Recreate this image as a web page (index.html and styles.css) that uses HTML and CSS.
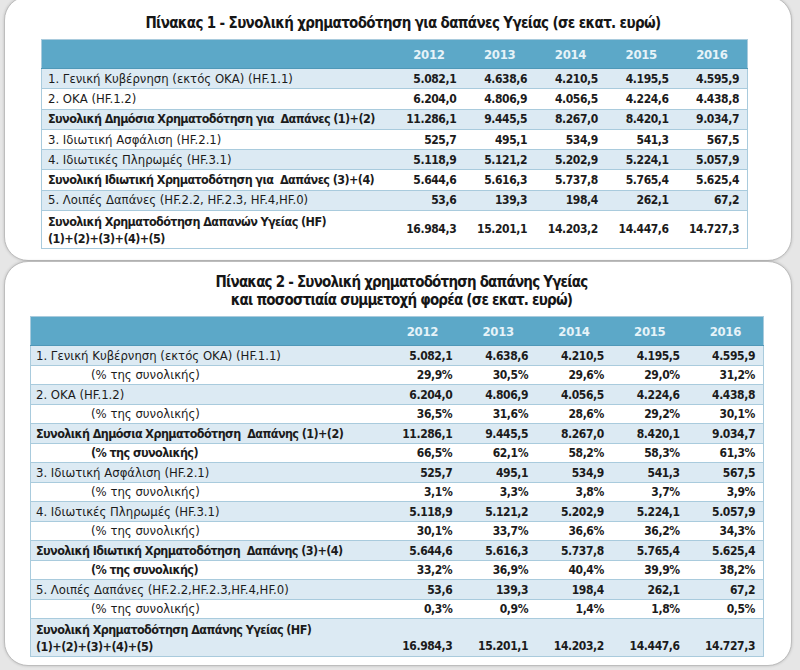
FILE: index.html
```html
<!DOCTYPE html>
<html lang="el">
<head>
<meta charset="utf-8">
<title>Πίνακες χρηματοδότησης Υγείας</title>
<link rel="stylesheet" href="styles.css">
</head>
<body>
<div class="page">
  <section class="card card-1">
    <h2 class="title">Πίνακας 1 - Συνολική χρηματοδότηση για δαπάνες Υγείας (σε εκατ. ευρώ)</h2>
    <table class="data t1">
      <colgroup><col class="c-label"><col><col><col><col><col></colgroup>
      <thead>
        <tr><th></th><th>2012</th><th>2013</th><th>2014</th><th>2015</th><th>2016</th></tr>
      </thead>
      <tbody>
        <tr><td class="lbl">1. Γενική Κυβέρνηση (εκτός ΟΚΑ) (HF.1.1)</td><td>5.082,1</td><td>4.638,6</td><td>4.210,5</td><td>4.195,5</td><td>4.595,9</td></tr>
        <tr><td class="lbl">2. ΟΚΑ (HF.1.2)</td><td>6.204,0</td><td>4.806,9</td><td>4.056,5</td><td>4.224,6</td><td>4.438,8</td></tr>
        <tr class="b"><td class="lbl">Συνολική Δημόσια Χρηματοδότηση για&nbsp; Δαπάνες (1)+(2)</td><td>11.286,1</td><td>9.445,5</td><td>8.267,0</td><td>8.420,1</td><td>9.034,7</td></tr>
        <tr><td class="lbl">3. Ιδιωτική Ασφάλιση (HF.2.1)</td><td>525,7</td><td>495,1</td><td>534,9</td><td>541,3</td><td>567,5</td></tr>
        <tr><td class="lbl">4. Ιδιωτικές Πληρωμές (HF.3.1)</td><td>5.118,9</td><td>5.121,2</td><td>5.202,9</td><td>5.224,1</td><td>5.057,9</td></tr>
        <tr class="b"><td class="lbl">Συνολική Ιδιωτική Χρηματοδότηση για&nbsp; Δαπάνες (3)+(4)</td><td>5.644,6</td><td>5.616,3</td><td>5.737,8</td><td>5.765,4</td><td>5.625,4</td></tr>
        <tr><td class="lbl">5. Λοιπές Δαπάνες (HF.2.2, HF.2.3, HF.4,HF.0)</td><td>53,6</td><td>139,3</td><td>198,4</td><td>262,1</td><td>67,2</td></tr>
        <tr class="b total"><td class="lbl">Συνολική Χρηματοδότηση Δαπανών Υγείας (HF)<br>(1)+(2)+(3)+(4)+(5)</td><td>16.984,3</td><td>15.201,1</td><td>14.203,2</td><td>14.447,6</td><td>14.727,3</td></tr>
      </tbody>
    </table>
  </section>

  <section class="card card-2">
    <h2 class="title title-2">Πίνακας 2 - Συνολική χρηματοδότηση δαπάνης Υγείας<br>και ποσοστιαία συμμετοχή φορέα (σε εκατ. ευρώ)</h2>
    <table class="data t2">
      <colgroup><col class="c-label"><col><col><col><col><col></colgroup>
      <thead>
        <tr><th></th><th>2012</th><th>2013</th><th>2014</th><th>2015</th><th>2016</th></tr>
      </thead>
      <tbody>
        <tr><td class="lbl">1. Γενική Κυβέρνηση (εκτός ΟΚΑ) (HF.1.1)</td><td>5.082,1</td><td>4.638,6</td><td>4.210,5</td><td>4.195,5</td><td>4.595,9</td></tr>
        <tr><td class="lbl pct">(% της συνολικής)</td><td>29,9%</td><td>30,5%</td><td>29,6%</td><td>29,0%</td><td>31,2%</td></tr>
        <tr><td class="lbl">2. ΟΚΑ (HF.1.2)</td><td>6.204,0</td><td>4.806,9</td><td>4.056,5</td><td>4.224,6</td><td>4.438,8</td></tr>
        <tr><td class="lbl pct">(% της συνολικής)</td><td>36,5%</td><td>31,6%</td><td>28,6%</td><td>29,2%</td><td>30,1%</td></tr>
        <tr class="b"><td class="lbl">Συνολική Δημόσια Χρηματοδότηση&nbsp; Δαπάνης (1)+(2)</td><td>11.286,1</td><td>9.445,5</td><td>8.267,0</td><td>8.420,1</td><td>9.034,7</td></tr>
        <tr class="b"><td class="lbl pct">(% της συνολικής)</td><td>66,5%</td><td>62,1%</td><td>58,2%</td><td>58,3%</td><td>61,3%</td></tr>
        <tr><td class="lbl">3. Ιδιωτική Ασφάλιση (HF.2.1)</td><td>525,7</td><td>495,1</td><td>534,9</td><td>541,3</td><td>567,5</td></tr>
        <tr><td class="lbl pct">(% της συνολικής)</td><td>3,1%</td><td>3,3%</td><td>3,8%</td><td>3,7%</td><td>3,9%</td></tr>
        <tr><td class="lbl">4. Ιδιωτικές Πληρωμές (HF.3.1)</td><td>5.118,9</td><td>5.121,2</td><td>5.202,9</td><td>5.224,1</td><td>5.057,9</td></tr>
        <tr><td class="lbl pct">(% της συνολικής)</td><td>30,1%</td><td>33,7%</td><td>36,6%</td><td>36,2%</td><td>34,3%</td></tr>
        <tr class="b"><td class="lbl">Συνολική Ιδιωτική Χρηματοδότηση&nbsp; Δαπάνης (3)+(4)</td><td>5.644,6</td><td>5.616,3</td><td>5.737,8</td><td>5.765,4</td><td>5.625,4</td></tr>
        <tr class="b"><td class="lbl pct">(% της συνολικής)</td><td>33,2%</td><td>36,9%</td><td>40,4%</td><td>39,9%</td><td>38,2%</td></tr>
        <tr><td class="lbl">5. Λοιπές Δαπάνες (HF.2.2,HF.2.3,HF.4,HF.0)</td><td>53,6</td><td>139,3</td><td>198,4</td><td>262,1</td><td>67,2</td></tr>
        <tr><td class="lbl pct">(% της συνολικής)</td><td>0,3%</td><td>0,9%</td><td>1,4%</td><td>1,8%</td><td>0,5%</td></tr>
        <tr class="b total"><td class="lbl">Συνολική Χρηματοδότηση Δαπάνης Υγείας (HF)<br>(1)+(2)+(3)+(4)+(5)</td><td>16.984,3</td><td>15.201,1</td><td>14.203,2</td><td>14.447,6</td><td>14.727,3</td></tr>
      </tbody>
    </table>
  </section>
</div>
</body>
</html>
```

FILE: styles.css
```css
html, body {
  margin: 0;
  padding: 0;
  background: #e6e6e6;
}

body {
  width: 800px;
  height: 670px;
  overflow: hidden;
  font-family: "DejaVu Sans Condensed", "DejaVu Sans", sans-serif;
  font-stretch: condensed;
  color: #1b1b1b;
}

.page {
  display: flex;
  flex-direction: column;
  padding: 0 8px 0 4px;
}

.card {
  background: #ffffff;
  border: 1px solid #bdbdbd;
  border-radius: 24px;
  box-shadow: 0 0 3px rgba(0, 0, 0, 0.18);
}

.card-1 {
  margin-top: -4px;
  height: 265px;
  box-sizing: border-box;
  padding: 16px 0 0 36px;
}

.card-2 {
  margin-top: 0;
  height: 405px;
  box-sizing: border-box;
  padding: 11px 0 0 25px;
}

.title {
  margin: 0 0 6px 0;
  font-size: 15px;
  line-height: 20px;
  font-weight: bold;
  letter-spacing: -0.65px;
  text-align: center;
  padding-right: 26px;
  color: #161616;
}

.title-2 {
  line-height: 18px;
  margin-bottom: 7px;
  letter-spacing: -0.8px;
  padding-right: 18px;
}

.data {
  border-collapse: collapse;
  table-layout: fixed;
  border: 1px solid #a9cbdd;
  font-size: 12px;
}

.t1 { width: 707px; }
.t1 .c-label { width: 352px; }

.t2 { width: 734px; }
.t2 .c-label { width: 354px; }

.data thead th {
  background: #5ca8c8;
  color: #e6f3f8;
  font-weight: bold;
  font-size: 13px;
  letter-spacing: -0.3px;
  height: 28px;
  padding: 0;
  text-align: center;
  border-bottom: 1px solid #4f98b8;
}

.data td {
  padding: 0 8px 0 0;
  text-align: right;
  font-weight: bold;
  letter-spacing: -0.4px;
  border-bottom: 1px solid #a9cbdd;
  white-space: nowrap;
  line-height: 14px;
}

.t1 td { height: 19.3px; }
.t2 td { height: 18px; }
.t2 tbody tr:nth-child(odd) td { height: 19px; }

.data td.lbl {
  text-align: left;
  font-weight: normal;
  font-size: 13px;
  letter-spacing: 0;
  padding: 0 0 0 6px;
}

.t2 td.lbl { padding-left: 5px; }
.t2 td.pct { padding-left: 60px; }

.data tr.b td.lbl {
  font-weight: bold;
  font-size: 12.5px;
  letter-spacing: -0.6px;
}

.data tbody tr:nth-child(odd) td { background: #dceaf3; }

.t1 tr.total td { height: 37px; line-height: 17px; }
.t2 tbody tr.total td { height: 36px; line-height: 17px; vertical-align: bottom; padding-bottom: 1px; }
```
